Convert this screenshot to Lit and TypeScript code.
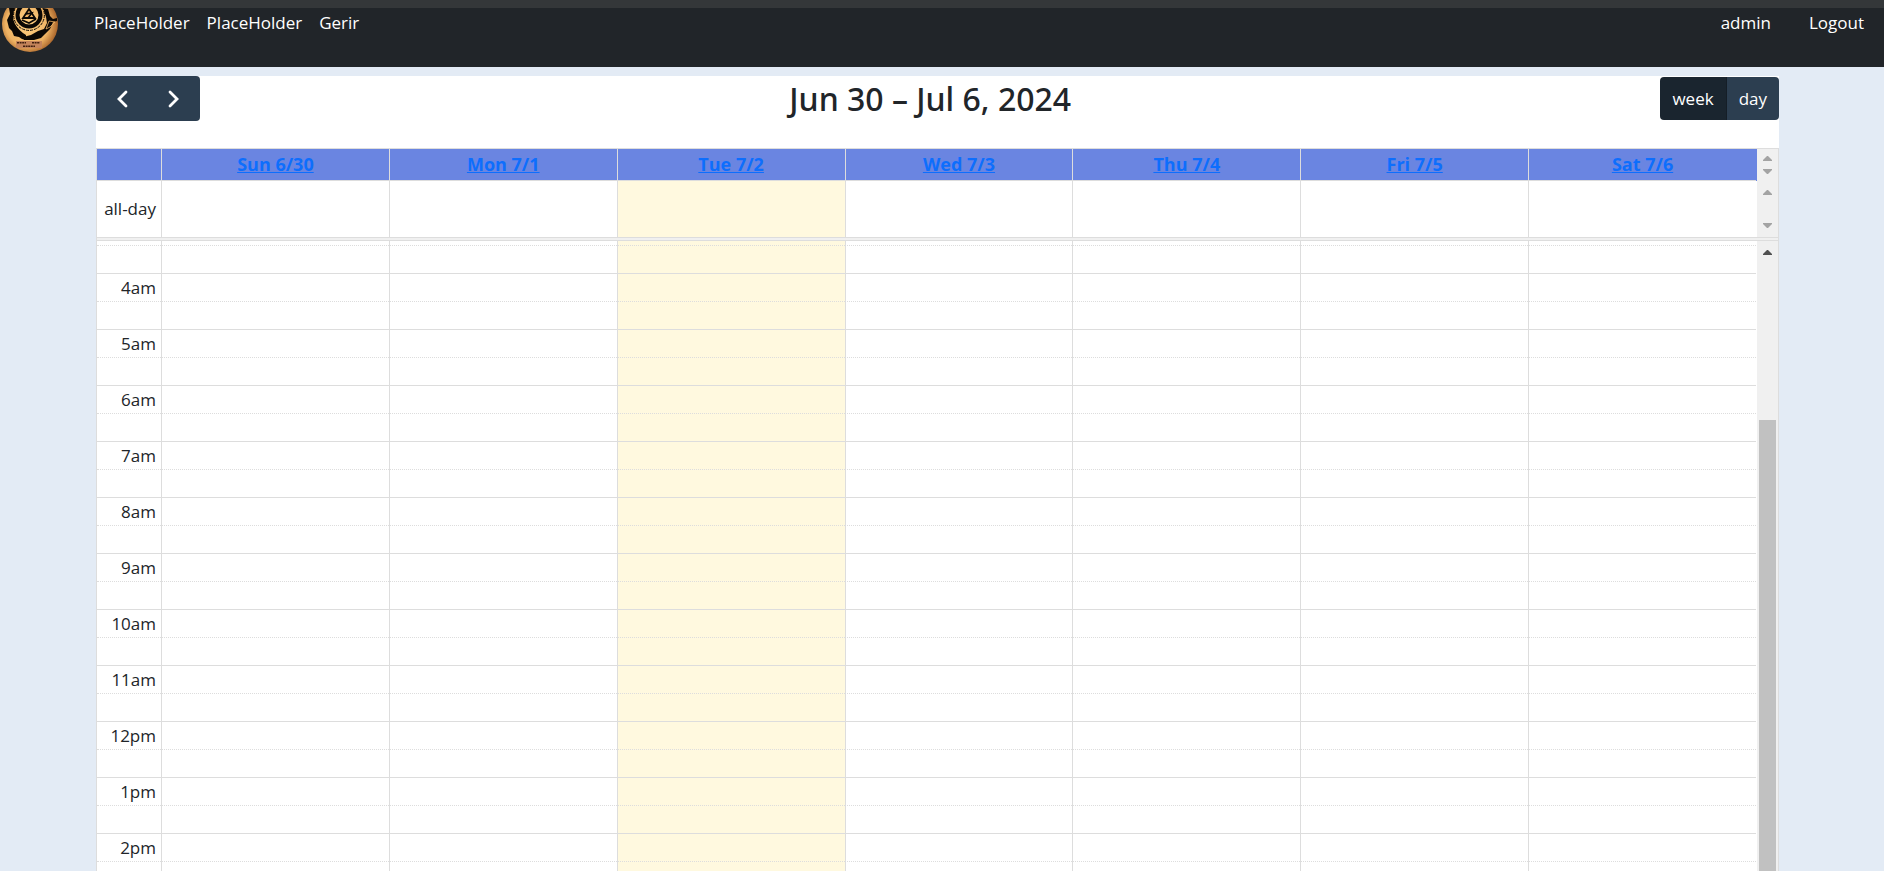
import { LitElement, html, css, svg } from "lit";
import { customElement } from "lit/decorators.js";
import { classMap } from "lit/directives/class-map.js";

const DAYS = ["Sun 6/30", "Mon 7/1", "Tue 7/2", "Wed 7/3", "Thu 7/4", "Fri 7/5", "Sat 7/6"];
const TODAY = 2;
const HOURS = ["4am", "5am", "6am", "7am", "8am", "9am", "10am", "11am", "12pm", "1pm", "2pm"];

const arrow = (dir: "up" | "down", active = false) => html`
  <svg class=${classMap({ arrow: true, active })} viewBox="0 0 9 5" aria-hidden="true">
    ${dir === "up" ? svg`<path d="M0 5V4L4 0H5L9 4V5Z" />` : svg`<path d="M0 0V1L4 5H5L9 1V0Z" />`}
  </svg>
`;

@customElement("site-nav")
export class SiteNav extends LitElement {
  static styles = css`
    :host {
      display: block;
      border-top: 8px solid #343739;
      background: #212529;
    }
    .bar {
      display: flex;
      align-items: flex-start;
      height: 59px;
      overflow: hidden;
    }
    .brand {
      display: block;
      width: 60px;
      height: 44px;
      margin-right: 34px;
    }
    .brand svg {
      display: block;
      width: 60px;
      height: 44px;
    }
    .links,
    .account {
      display: flex;
      gap: 17px;
      margin: 0;
      padding: 3px 0 0;
      list-style: none;
    }
    .account {
      gap: 38px;
      margin-left: auto;
      padding-right: 20px;
    }
    a {
      color: #fff;
      font-size: 17px;
      line-height: 24px;
      text-decoration: none;
    }
  `;

  render() {
    return html`
      <nav class="bar">
        <a class="brand" href="#" aria-label="Home">
          <svg viewBox="0 8 60 44" aria-hidden="true">
            <defs>
              <radialGradient id="wood" cx="0.45" cy="0.5" r="0.55">
                <stop offset="0" stop-color="#ffd184" />
                <stop offset="0.7" stop-color="#eeb263" />
                <stop offset="1" stop-color="#a8642a" />
              </radialGradient>
            </defs>
            <circle cx="30" cy="24" r="28" fill="url(#wood)" />
            <path
              d="M9 8L15 8Q11 17 15 24Q19 31 26 35L26 40L22 39L19 37L14 36L12 31L9 28L7 20L10 14Z"
              fill="#0b0805"
            />
            <path
              d="M43 8L48 9L50 16L53 19L57 18V21L53 22L50 29L45 34L41 38L34 40L24 40L23 37L31 35L38 31L44 29L47 23L46 17Z"
              fill="#0b0805"
            />
            <circle cx="29" cy="15" r="11.5" fill="none" stroke="#0b0805" stroke-width="4" />
            <circle cx="29" cy="15" r="15.4" fill="none" stroke="#0b0805" stroke-width="1" stroke-dasharray="3 1" />
            <path d="M29 9L35 18H23Z" fill="#eeb263" stroke="#0b0805" stroke-width="1.8" />
            <path d="M26 14L32 13L28 18M22 20L29 23L36 19" fill="none" stroke="#0b0805" stroke-width="1.6" />
            <path d="M49 21L55 22L50 27L46 29Z" fill="none" stroke="#eeb263" stroke-width="0.8" />
            <rect x="16" y="41" width="26" height="7" fill="#c4845a" />
            <path d="M17 42.8H26M32 42.8H40M23 46.2H35" stroke="#40200f" stroke-width="1.6" stroke-dasharray="2 0.6" />
          </svg>
        </a>
        <ul class="links">
          <li><a href="#">PlaceHolder</a></li>
          <li><a href="#">PlaceHolder</a></li>
          <li><a href="#">Gerir</a></li>
        </ul>
        <ul class="account">
          <li><a href="#">admin</a></li>
          <li><a href="#">Logout</a></li>
        </ul>
      </nav>
    `;
  }
}

@customElement("week-calendar")
export class WeekCalendar extends LitElement {
  static styles = css`
    :host {
      display: flex;
      flex-direction: column;
      min-height: 0;
      background: #fff;
      color: #212529;
      font-size: 17px;
    }
    .toolbar {
      display: flex;
      align-items: center;
      justify-content: space-between;
      margin-bottom: 27px;
    }
    .group {
      display: flex;
      border-radius: 4px;
      overflow: hidden;
    }
    button {
      display: flex;
      align-items: center;
      justify-content: center;
      height: 43px;
      padding: 0 12px;
      border: 0;
      background: #2c3e50;
      color: #fff;
      font: inherit;
    }
    button.step {
      width: 52px;
      height: 45px;
    }
    .step svg {
      width: 12px;
      height: 18px;
      fill: none;
      stroke: #fff;
      stroke-width: 2.8;
      stroke-linecap: round;
    }
    button.current {
      background: #1a252f;
      border-right: 1px solid #151e27;
    }
    h2 {
      margin: 0;
      font-family: "Segoe UI", "Noto Sans", sans-serif;
      font-size: 32px;
      font-weight: 500;
      line-height: 36px;
    }
    .grid {
      display: flex;
      flex: 1;
      flex-direction: column;
      min-height: 0;
      border: 1px solid #ddd;
      border-bottom: 0;
    }
    .section {
      display: flex;
    }
    .section.slots {
      flex: 1;
      min-height: 0;
    }
    .divider {
      height: 2px;
      border: solid #ddd;
      border-width: 1px 0;
      background: #f0f0f0;
    }
    .pane {
      flex: 1;
      padding-right: 1px;
      overflow: hidden;
    }
    .pane.head {
      background: #6a85e1;
    }
    table {
      width: 100%;
      table-layout: fixed;
      border-spacing: 0;
    }
    th,
    td {
      box-sizing: border-box;
      padding: 0;
      border-left: 1px solid #ddd;
    }
    .axis {
      width: 64px;
      padding-right: 5px;
      border-left: 0;
      font-weight: 400;
      text-align: right;
      white-space: nowrap;
    }
    .heading {
      height: 32px;
      padding-bottom: 2px;
      border-bottom: 1px solid #ddd;
      font-size: 18px;
      font-weight: 700;
      line-height: 24px;
    }
    .heading a {
      color: #0d6efd;
    }
    .all-day {
      height: 56px;
      padding-bottom: 2px;
    }
    .today {
      background: #fff9df;
    }
    .lead {
      height: 4px;
    }
    .slot {
      height: 28px;
      border-top: 1px solid #ddd;
      line-height: 24px;
    }
    .minor {
      border-top-style: dotted;
    }
    .track {
      display: flex;
      flex: none;
      flex-direction: column;
      align-items: center;
      justify-content: space-between;
      box-sizing: border-box;
      width: 21px;
      padding: 9px 0;
      background: #f0f0f0;
    }
    .track.short {
      padding: 7px 0;
    }
    .track.long {
      padding-bottom: 0;
    }
    .arrow {
      display: block;
      width: 9px;
      height: 5px;
      fill: #a3a3a3;
    }
    .arrow.active {
      fill: #505050;
    }
    .thumb {
      flex: 1;
      width: 17px;
      margin-top: 165px;
      background: #c1c1c1;
    }
  `;

  private row(kind: "lead" | "slot", label = "", minor = false) {
    return html`
      <tr>
        <th class=${classMap({ axis: true, [kind]: true, minor })} scope="row">${label}</th>
        ${DAYS.map((_, i) => html`<td class=${classMap({ [kind]: true, minor, today: i === TODAY })}></td>`)}
      </tr>
    `;
  }

  render() {
    return html`
      <header class="toolbar">
        <div class="group">
          <button class="step" aria-label="Previous week">
            <svg viewBox="0 0 12 18" aria-hidden="true"><path d="M10 2L3 9L10 16" /></svg>
          </button>
          <button class="step" aria-label="Next week">
            <svg viewBox="0 0 12 18" aria-hidden="true"><path d="M2 2L9 9L2 16" /></svg>
          </button>
        </div>
        <h2>Jun 30 – Jul 6, 2024</h2>
        <div class="group">
          <button class="current" aria-pressed="true">week</button>
          <button aria-pressed="false">day</button>
        </div>
      </header>
      <div class="grid">
        <div class="section">
          <div class="pane head">
            <table>
              <tr>
                <td class="axis heading"></td>
                ${DAYS.map((d) => html`<th class="heading" scope="col"><a href="#">${d}</a></th>`)}
              </tr>
            </table>
          </div>
          <div class="track short">${arrow("up")}${arrow("down")}</div>
        </div>
        <div class="section">
          <div class="pane">
            <table>
              <tr>
                <th class="axis all-day" scope="row">all-day</th>
                ${DAYS.map((_, i) => html`<td class=${classMap({ "all-day": true, today: i === TODAY })}></td>`)}
              </tr>
            </table>
          </div>
          <div class="track">${arrow("up")}${arrow("down")}</div>
        </div>
        <div class="divider"></div>
        <div class="section slots">
          <div class="pane">
            <table>
              ${this.row("lead")} ${this.row("slot", "", true)}
              ${HOURS.map((h) => [this.row("slot", h), this.row("slot", "", true)])}
            </table>
          </div>
          <div class="track long">
            ${arrow("up", true)}
            <div class="thumb"></div>
          </div>
        </div>
      </div>
    `;
  }
}

@customElement("app-root")
export class AppRoot extends LitElement {
  static styles = css`
    :host {
      display: flex;
      flex-direction: column;
      height: 100vh;
      overflow: hidden;
      background: #e3ebf5;
      font-family: "Segoe UI", "Open Sans", "Noto Sans", sans-serif;
    }
    site-nav {
      flex: none;
    }
    week-calendar {
      flex: 1;
      margin: 9px 105px 0 96px;
    }
  `;

  render() {
    return html`
      <site-nav></site-nav>
      <week-calendar></week-calendar>
    `;
  }
}
